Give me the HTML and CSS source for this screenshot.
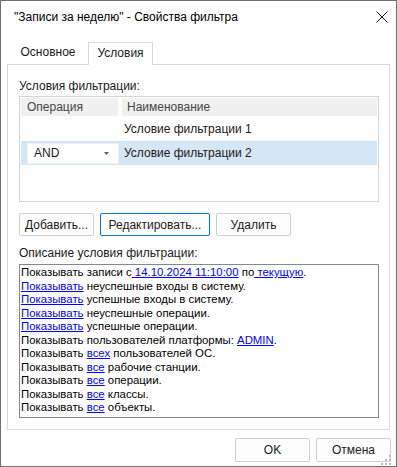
FILE: index.html
```html
<!DOCTYPE html>
<html lang="ru">
<head>
    <meta charset="UTF-8">
    <title>Свойства фильтра</title>
    <link rel="stylesheet" href="styles.css">
</head>
<body>
    <div class="window">
        <div class="titlebar">
            <span class="title">"Записи за неделю" - Свойства фильтра</span>
            <svg class="close" width="12" height="12" viewBox="0 0 12 12">
                <path d="M0.5 0.5 L11.5 11.5 M11.5 0.5 L0.5 11.5" stroke="#1a1a1a" stroke-width="1"/>
            </svg>
        </div>

        <div class="tabs">
            <div class="tab">Основное</div>
            <div class="tab active">Условия</div>
        </div>

        <div class="panel">
            <div class="label">Условия фильтрации:</div>
            <div class="grid">
                <div class="grid-head">
                    <div class="col-op">Операция</div>
                    <div class="col-name">Наименование</div>
                </div>
                <div class="grid-row">
                    <div class="col-op"></div>
                    <div class="col-name">Условие фильтрации 1</div>
                </div>
                <div class="grid-row selected">
                    <div class="col-op">
                        <div class="combo">
                            <span>AND</span>
                            <svg width="5" height="3" viewBox="0 0 5 3"><path d="M0 0 H5 L2.5 3 Z" fill="#606060"/></svg>
                        </div>
                    </div>
                    <div class="col-name">Условие фильтрации 2</div>
                </div>
            </div>

            <div class="actions">
                <button class="btn btn-add">Добавить...</button>
                <button class="btn btn-edit focused">Редактировать...</button>
                <button class="btn btn-del">Удалить</button>
            </div>

            <div class="label label-desc">Описание условия фильтрации:</div>
            <div class="desc">
                <div>Показывать записи с<a href="#"> 14.10.2024 11:10:00</a> по<a href="#"> текущую</a>.</div>
                <div><a href="#">Показывать</a> неуспешные входы в систему.</div>
                <div><a href="#">Показывать</a> успешные входы в систему.</div>
                <div><a href="#">Показывать</a> неуспешные операции.</div>
                <div><a href="#">Показывать</a> успешные операции.</div>
                <div>Показывать пользователей платформы: <a href="#">ADMIN</a>.</div>
                <div>Показывать <a href="#">всех</a> пользователей ОС.</div>
                <div>Показывать <a href="#">все</a> рабочие станции.</div>
                <div>Показывать <a href="#">все</a> операции.</div>
                <div>Показывать <a href="#">все</a> классы.</div>
                <div>Показывать <a href="#">все</a> объекты.</div>
            </div>
        </div>

        <div class="footer">
            <button class="btn btn-ok">OK</button>
            <button class="btn btn-cancel">Отмена</button>
        </div>

        <svg class="grip" width="10" height="10" viewBox="0 0 10 10">
            <rect x="8" y="0" width="2" height="2" fill="#b8b8b8"/>
            <rect x="4" y="4" width="2" height="2" fill="#b8b8b8"/>
            <rect x="8" y="4" width="2" height="2" fill="#b8b8b8"/>
            <rect x="0" y="8" width="2" height="2" fill="#b8b8b8"/>
            <rect x="4" y="8" width="2" height="2" fill="#b8b8b8"/>
            <rect x="8" y="8" width="2" height="2" fill="#b8b8b8"/>
        </svg>
    </div>
</body>
</html>
```

FILE: styles.css
```css
body {
    margin: 0;
    padding: 0;
    font-family: "Liberation Sans", Arial, sans-serif;
    font-size: 12px;
    color: #1a1a1a;
    background: #ffffff;
}
.window {
    position: relative;
    width: 397px;
    height: 467px;
    box-sizing: border-box;
    border: 1px solid #6f6f6f;
    background: #ffffff;
    display: flex;
    flex-direction: column;
}
.titlebar {
    height: 41px;
    display: flex;
    align-items: center;
    justify-content: space-between;
    padding: 0 8px 10px 13px;
    box-sizing: border-box;
}
.title {
    font-size: 12px;
    color: #000;
}
.close {
    margin-top: 1px;
}
.tabs {
    height: 22px;
    display: flex;
    padding-left: 7px;
}
.tab {
    width: 80px;
    height: 22px;
    line-height: 21px;
    text-align: center;
    color: #1a1a1a;
}
.tab.active {
    position: relative;
    z-index: 1;
    width: 65px;
    height: 23px;
    box-sizing: border-box;
    border: 1px solid #d9d9d9;
    border-bottom: none;
    background: #ffffff;
    margin-bottom: -1px;
}
.panel {
    margin: 0 6px;
    height: 366px;
    box-sizing: border-box;
    border: 1px solid #d9d9d9;
    padding: 13px 10px 11px 11px;
    display: flex;
    flex-direction: column;
}
.label {
    height: 16px;
    line-height: 16px;
    color: #1a1a1a;
    margin-bottom: 2px;
}
.label-desc {
    margin-top: 9px;
    margin-bottom: 3px;
}
.grid {
    height: 106px;
    box-sizing: border-box;
    border: 1px solid #d4d4d4;
    padding: 1px 0 0 1px;
}
.grid-head {
    display: flex;
    height: 18px;
    line-height: 18px;
    color: #444;
}
.grid-head .col-op {
    width: 97px;
    background: #f0f0f0;
    padding-left: 6px;
    box-sizing: border-box;
}
.grid-head .col-name {
    width: 255px;
    margin-left: 4px;
    background: #f0f0f0;
    padding-left: 5px;
    box-sizing: border-box;
}
.grid-row {
    display: flex;
    height: 25px;
    align-items: center;
}
.grid-row.selected {
    height: 24px;
    background: #d5e6f5;
    width: 356px;
}
.grid-row .col-op {
    width: 103px;
    padding-left: 6px;
    box-sizing: border-box;
}
.combo {
    width: 92px;
    height: 21px;
    box-sizing: border-box;
    background: #ffffff;
    border: 1px solid #f0f0f0;
    display: flex;
    align-items: center;
    justify-content: space-between;
    padding: 0 9px 0 6px;
}
.actions {
    display: flex;
    gap: 6px;
    margin-top: 11px;
}
.btn {
    height: 23px;
    box-sizing: border-box;
    border: 1px solid #d0d0d0;
    border-radius: 2px;
    background: #fdfdfd;
    font-family: "Liberation Sans", Arial, sans-serif;
    font-size: 12px;
    color: #1a1a1a;
    padding: 0;
}
.btn-add {
    width: 75px;
}
.btn-edit {
    width: 110px;
}
.btn-del {
    width: 75px;
}
.btn.focused {
    border-color: #0078d7;
}
.desc {
    height: 154px;
    box-sizing: border-box;
    border: 1px solid #828790;
    padding: 1px 1px;
    font-size: 11.4px;
    line-height: 13.5px;
    color: #000;
}
.desc a {
    color: #0000ff;
}
.footer {
    height: 36px;
    display: flex;
    justify-content: flex-end;
    gap: 6px;
    padding: 8px 5px 4px 0;
    box-sizing: border-box;
}
.footer .btn {
    width: 75px;
    height: 24px;
}
.grip {
    position: absolute;
    right: 5px;
    bottom: 1px;
}
```
